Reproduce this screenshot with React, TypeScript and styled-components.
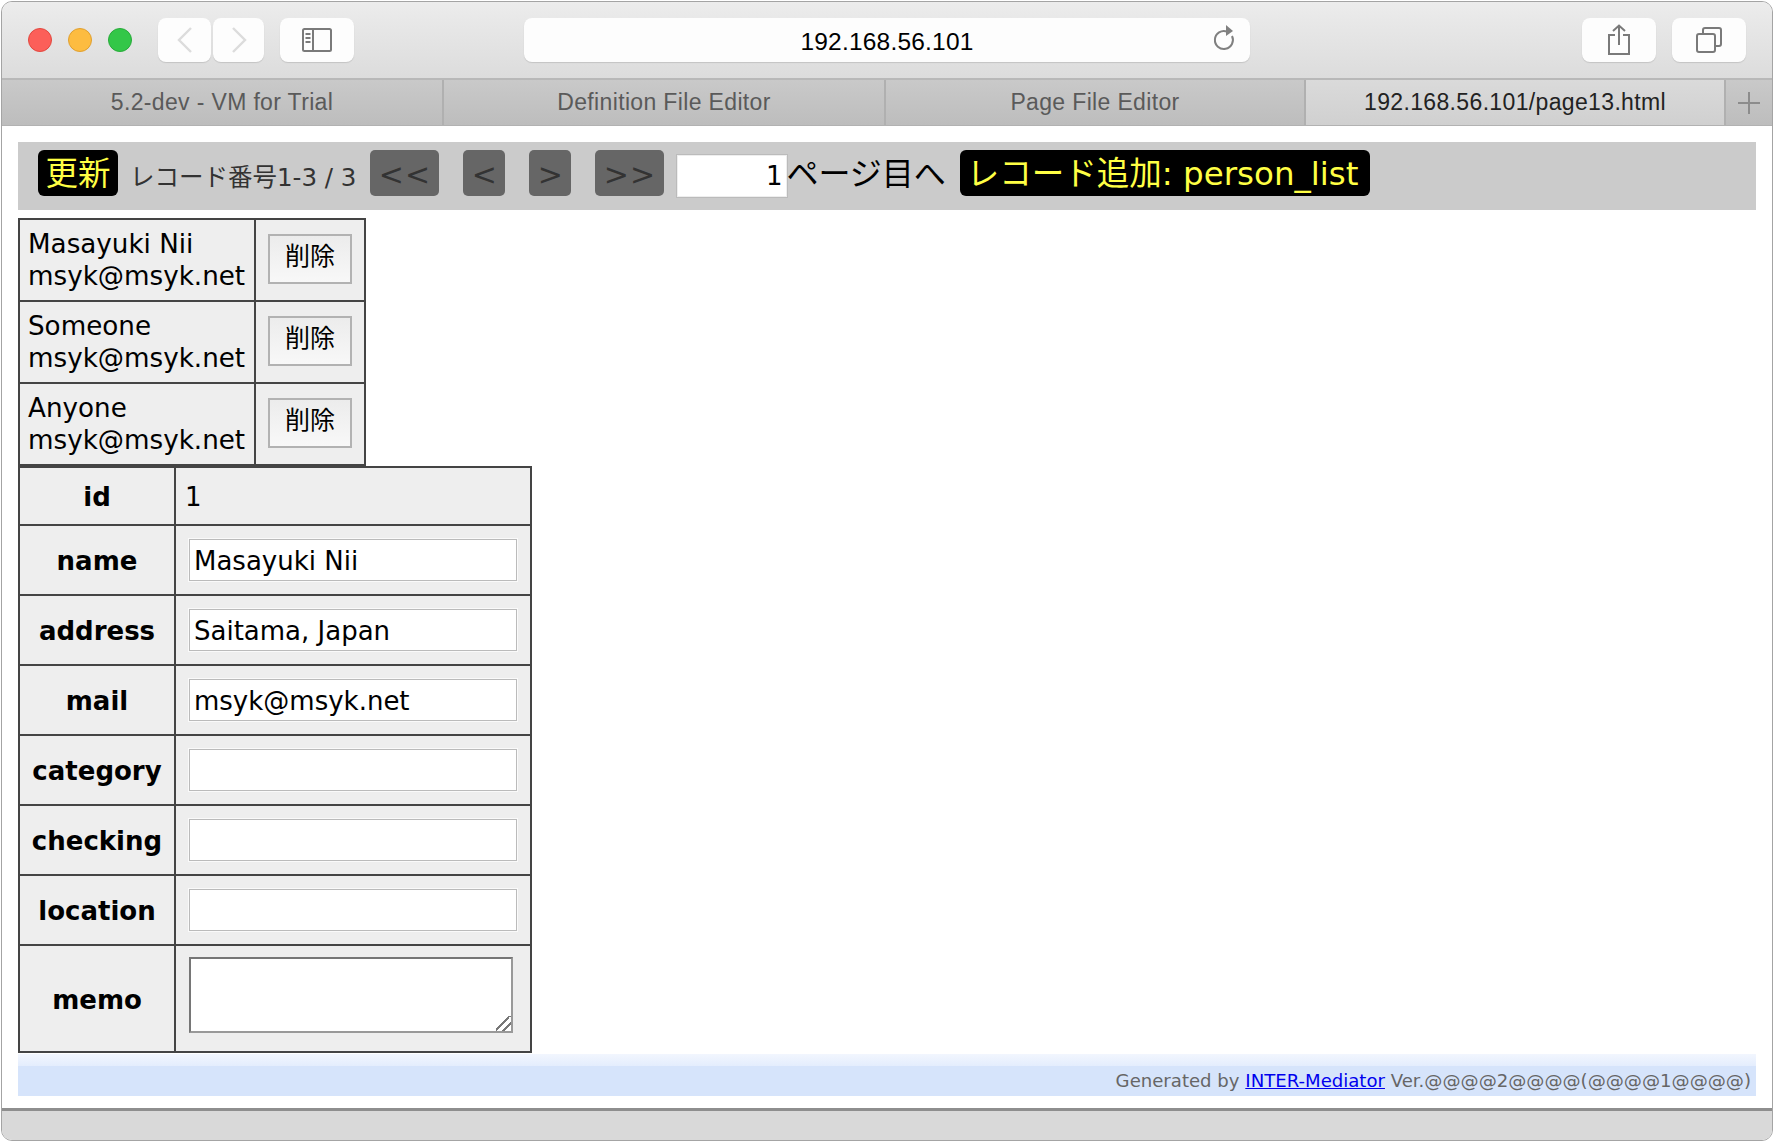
import React from "react";
import styled, { createGlobalStyle } from "styled-components";

const PAGE_FONT = `"DejaVu Sans", "Noto Sans CJK JP", sans-serif`;
const CHROME_FONT = `"Liberation Sans", Arial, sans-serif`;

const GlobalStyle = createGlobalStyle`
    html, body {
        margin: 0;
        padding: 0;
        background: #fff;
    }
`;

const Window = styled.div`
    box-sizing: border-box;
    width: 1772px;
    height: 1140px;
    margin: 1px 1px 0;
    border: 1px solid #a4a4a4;
    border-radius: 11px;
    overflow: hidden;
    display: flex;
    flex-direction: column;
    background: #fff;
`;

const TitleBar = styled.div`
    box-sizing: border-box;
    height: 78px;
    flex: none;
    display: flex;
    align-items: center;
    padding: 0 26px;
    background: linear-gradient(#ececec, #dcdcdc);
    border-bottom: 2px solid #b8b8b8;
`;

const Lights = styled.div`
    display: flex;
    gap: 16px;
    margin-right: 26px;
`;

const Light = styled.span<{ $fill: string; $edge: string }>`
    width: 24px;
    height: 24px;
    box-sizing: border-box;
    border-radius: 50%;
    background: ${(p) => p.$fill};
    border: 1px solid ${(p) => p.$edge};
`;

const ChromeButton = styled.div<{ $width: number }>`
    width: ${(p) => p.$width}px;
    height: 44px;
    flex: none;
    display: flex;
    align-items: center;
    justify-content: center;
    background: #fdfdfd;
    border-radius: 8px;
    box-shadow: 0 1px 1px #c4c4c4;
`;

const BackButton = styled(ChromeButton)`
    margin-right: 2px;
`;

const SidebarButton = styled(ChromeButton)`
    margin-left: 16px;
`;

const ShareButton = styled(ChromeButton)`
    margin-left: auto;
`;

const TabsButton = styled(ChromeButton)`
    margin-left: 16px;
`;

const AddressBar = styled.div`
    position: relative;
    width: 726px;
    height: 44px;
    margin-left: 170px;
    padding-top: 3px;
    box-sizing: border-box;
    display: flex;
    align-items: center;
    justify-content: center;
    background: #fdfdfd;
    border-radius: 8px;
    box-shadow: 0 1px 1px #c4c4c4;
    font: 24.5px ${CHROME_FONT};
    letter-spacing: 0.2px;
    color: #000;
`;

const ReloadIcon = styled.svg`
    position: absolute;
    right: 14px;
    top: 6px;
`;

const TabStrip = styled.div`
    height: 46px;
    flex: none;
    display: grid;
    grid-template-columns: 442px 442px 420px 420px 1fr;
    border-bottom: 1px solid #b2b2b2;
    box-sizing: border-box;
`;

const Tab = styled.div<{ $active?: boolean }>`
    display: flex;
    align-items: center;
    justify-content: center;
    font: 23px ${CHROME_FONT};
    letter-spacing: 0.35px;
    color: ${(p) => (p.$active ? "#222" : "#5a5a5a")};
    background: ${(p) =>
        p.$active ? "linear-gradient(#dadada, #d0d0d0)" : "linear-gradient(#c9c9c9, #bdbdbd)"};
    border-right: 2px solid #b0b0b0;
    box-sizing: border-box;
`;

const NewTab = styled(Tab)`
    border-right: none;
`;

const Content = styled.div`
    flex: 1;
    display: flex;
    flex-direction: column;
    padding: 16px 16px 0;
    min-height: 0;
    font-family: ${PAGE_FONT};
`;

const Toolbar = styled.div`
    box-sizing: border-box;
    height: 68px;
    flex: none;
    display: flex;
    align-items: center;
    padding: 0 0 6px 20px;
    margin-bottom: 8px;
    background: #cbcbcb;
`;

const BlackButton = styled.div`
    box-sizing: border-box;
    height: 46px;
    display: flex;
    align-items: center;
    padding: 0 0 5px 7px;
    border-radius: 6px;
    background: #000;
    color: #ffff44;
    font-size: 32.5px;
    white-space: nowrap;
`;

const UpdateButton = styled(BlackButton)`
    width: 80px;
    justify-content: center;
    padding: 0 0 5px;
`;

const AddButton = styled(BlackButton)`
    margin-left: 14px;
    width: 410px;
`;

const RecordLabel = styled.span`
    margin: 4px 14px 0 12px;
    font-size: 24.5px;
    color: #333;
    white-space: nowrap;
`;

const NavButton = styled.div<{ $wide?: boolean }>`
    width: ${(p) => (p.$wide ? 69 : 42)}px;
    height: 46px;
    margin-right: 24px;
    padding-top: 2px;
    box-sizing: border-box;
    display: flex;
    align-items: center;
    justify-content: center;
    border-radius: 5px;
    background: #666;
    color: #333;
    font-size: 30px;
    letter-spacing: ${(p) => (p.$wide ? "1px" : "0")};
`;

const LastNavButton = styled(NavButton)`
    margin-right: 12px;
`;

const PageInput = styled.input`
    box-sizing: border-box;
    width: 112px;
    height: 44px;
    margin-top: 6px;
    padding: 0 5px 0 0;
    border: 1px solid #bbb;
    outline: 1px solid #eee;
    outline-offset: -2px;
    background: #fff;
    color: #000;
    font: 26px ${PAGE_FONT};
    text-align: right;
`;

const PageLabel = styled.span`
    margin-left: -2px;
    padding-bottom: 4px;
    font-size: 32px;
    color: #000;
    white-space: nowrap;
`;

const DataTable = styled.table<{ $width: number }>`
    width: ${(p) => p.$width}px;
    flex: none;
    table-layout: fixed;
    border-collapse: collapse;
    background: #eee;
    color: #000;
    font-size: 26px;

    td, th {
        border: 2px solid #444;
        box-sizing: border-box;
    }
`;

const ListRow = styled.tr`
    height: 82px;
`;

const PersonCell = styled.td`
    width: 236px;
    padding: 0 0 0 8px;
    font-size: 26.2px;
    line-height: 32px;
    white-space: nowrap;
`;

const ButtonCell = styled.td`
    padding: 0 0 2px 12px;
`;

const DeleteButton = styled.div`
    box-sizing: border-box;
    width: 84px;
    height: 50px;
    padding-bottom: 10px;
    display: flex;
    align-items: center;
    justify-content: center;
    border: 2px solid #b2b2b2;
    background: linear-gradient(#ececec, #f8f8f8);
    font-size: 25px;
`;

const DetailRow = styled.tr<{ $height: number }>`
    height: ${(p) => p.$height}px;
`;

const FieldName = styled.th`
    width: 156px;
    padding: 2px 0 0;
    font-weight: 700;
    text-align: center;
`;

const FieldValue = styled.td`
    padding: 0 0 0 13px;
`;

const IdValue = styled(FieldValue)`
    padding: 2px 0 0 9px;
`;

const MemoValue = styled(FieldValue)`
    padding-bottom: 7px;
`;

const TextField = styled.input`
    display: block;
    box-sizing: border-box;
    width: 328px;
    height: 42px;
    padding: 2px 4px 0;
    border: 1px solid #bbb;
    outline: 1px solid #fafafa;
    background: #fff;
    color: #000;
    font: 26px ${PAGE_FONT};
`;

const MemoField = styled.textarea`
    display: block;
    box-sizing: border-box;
    width: 324px;
    height: 76px;
    padding: 0;
    border: 2px solid;
    border-color: #767676 #999 #999 #767676;
    background: #fff;

    &::-webkit-resizer {
        background: linear-gradient(
            135deg,
            transparent 40%,
            #777 40%,
            #777 50%,
            transparent 50%,
            transparent 68%,
            #777 68%,
            #777 78%,
            transparent 78%
        );
    }
`;

const Footer = styled.div`
    box-sizing: border-box;
    height: 42px;
    margin-top: 1px;
    flex: none;
    padding: 13px 5px 0 0;
    text-align: right;
    background: linear-gradient(#f2f6fe 0, #e4edfd 12px, #d6e4fb 12px);
    color: #666;
    font-size: 18.1px;
    line-height: 28px;
    white-space: nowrap;
`;

const FooterLink = styled.a`
    color: #0000ee;
    text-decoration: underline;
`;

const StatusBar = styled.div`
    box-sizing: border-box;
    height: 32px;
    flex: none;
    border-top: 3px solid #8e8e8e;
    background: #d9d9d9;
`;

const people = ["Masayuki Nii", "Someone", "Anyone"];

const fields = [
    { name: "name", value: "Masayuki Nii" },
    { name: "address", value: "Saitama, Japan" },
    { name: "mail", value: "msyk@msyk.net" },
    { name: "category", value: "" },
    { name: "checking", value: "" },
    { name: "location", value: "" },
];

const App = () => {
    return (
        <Window>
            <GlobalStyle />
            <TitleBar>
                <Lights>
                    <Light $fill="#fc5f59" $edge="#e2483f" />
                    <Light $fill="#fdbc40" $edge="#e0a030" />
                    <Light $fill="#33c748" $edge="#28ab3a" />
                </Lights>
                <BackButton $width={53}>
                    <svg width="18" height="28" viewBox="0 0 18 28" fill="none" stroke="#dcdcdc" strokeWidth="2.4">
                        <path d="M15 2 L3 14 L15 26" />
                    </svg>
                </BackButton>
                <ChromeButton $width={51}>
                    <svg width="18" height="28" viewBox="0 0 18 28" fill="none" stroke="#dcdcdc" strokeWidth="2.4">
                        <path d="M3 2 L15 14 L3 26" />
                    </svg>
                </ChromeButton>
                <SidebarButton $width={74}>
                    <svg width="30" height="24" viewBox="0 0 30 24" fill="none" stroke="#7a7a7a" strokeWidth="2">
                        <rect x="1" y="1" width="28" height="22" rx="1.5" />
                        <path d="M11 1 V23" />
                        <path d="M3.5 6 H8.5 M3.5 10 H8.5 M3.5 14 H8.5" />
                    </svg>
                </SidebarButton>
                <AddressBar>
                    192.168.56.101
                    <ReloadIcon width="24" height="30" viewBox="0 0 24 30" fill="none">
                        <path d="M15 7.5 A9 9 0 1 0 20 12" stroke="#808080" strokeWidth="2" />
                        <path d="M14 1 L21 7 L14 12 Z" fill="#808080" />
                    </ReloadIcon>
                </AddressBar>
                <ShareButton $width={74}>
                    <svg width="24" height="32" viewBox="0 0 24 32" fill="none" stroke="#7a7a7a" strokeWidth="2">
                        <path d="M8 11 H2 V30 H22 V11 H16" />
                        <path d="M12 21 V2 M6 7 L12 1.5 L18 7" />
                    </svg>
                </ShareButton>
                <TabsButton $width={74}>
                    <svg width="26" height="26" viewBox="0 0 26 26" fill="none" stroke="#7a7a7a" strokeWidth="2">
                        <rect x="1" y="7" width="18" height="18" rx="2" />
                        <path d="M7 7 V3 Q7 1 9 1 H23 Q25 1 25 3 V17 Q25 19 23 19 H19" />
                    </svg>
                </TabsButton>
            </TitleBar>
            <TabStrip>
                <Tab>5.2-dev - VM for Trial</Tab>
                <Tab>Definition File Editor</Tab>
                <Tab>Page File Editor</Tab>
                <Tab $active>192.168.56.101/page13.html</Tab>
                <NewTab>
                    <svg width="22" height="22" viewBox="0 0 22 22" stroke="#8c8c8c" strokeWidth="2">
                        <path d="M11 0 V22 M0 11 H22" />
                    </svg>
                </NewTab>
            </TabStrip>
            <Content>
                <Toolbar>
                    <UpdateButton>更新</UpdateButton>
                    <RecordLabel>レコード番号1-3 / 3</RecordLabel>
                    <NavButton $wide>&lt;&lt;</NavButton>
                    <NavButton>&lt;</NavButton>
                    <NavButton>&gt;</NavButton>
                    <LastNavButton $wide>&gt;&gt;</LastNavButton>
                    <PageInput defaultValue="1" />
                    <PageLabel>ページ目へ</PageLabel>
                    <AddButton>レコード追加: person_list</AddButton>
                </Toolbar>
                <DataTable $width={348}>
                    <tbody>
                        {people.map((person) => (
                            <ListRow key={person}>
                                <PersonCell>
                                    {person}
                                    <br />
                                    msyk@msyk.net
                                </PersonCell>
                                <ButtonCell>
                                    <DeleteButton>削除</DeleteButton>
                                </ButtonCell>
                            </ListRow>
                        ))}
                    </tbody>
                </DataTable>
                <DataTable $width={514}>
                    <tbody>
                        <DetailRow $height={58}>
                            <FieldName>id</FieldName>
                            <IdValue>1</IdValue>
                        </DetailRow>
                        {fields.map((field) => (
                            <DetailRow $height={70} key={field.name}>
                                <FieldName>{field.name}</FieldName>
                                <FieldValue>
                                    <TextField defaultValue={field.value} />
                                </FieldValue>
                            </DetailRow>
                        ))}
                        <DetailRow $height={107}>
                            <FieldName>memo</FieldName>
                            <MemoValue>
                                <MemoField />
                            </MemoValue>
                        </DetailRow>
                    </tbody>
                </DataTable>
                <Footer>
                    Generated by <FooterLink href="#">INTER-Mediator</FooterLink> Ver.@@@@2@@@@(@@@@1@@@@)
                </Footer>
            </Content>
            <StatusBar />
        </Window>
    );
};

export default App;
